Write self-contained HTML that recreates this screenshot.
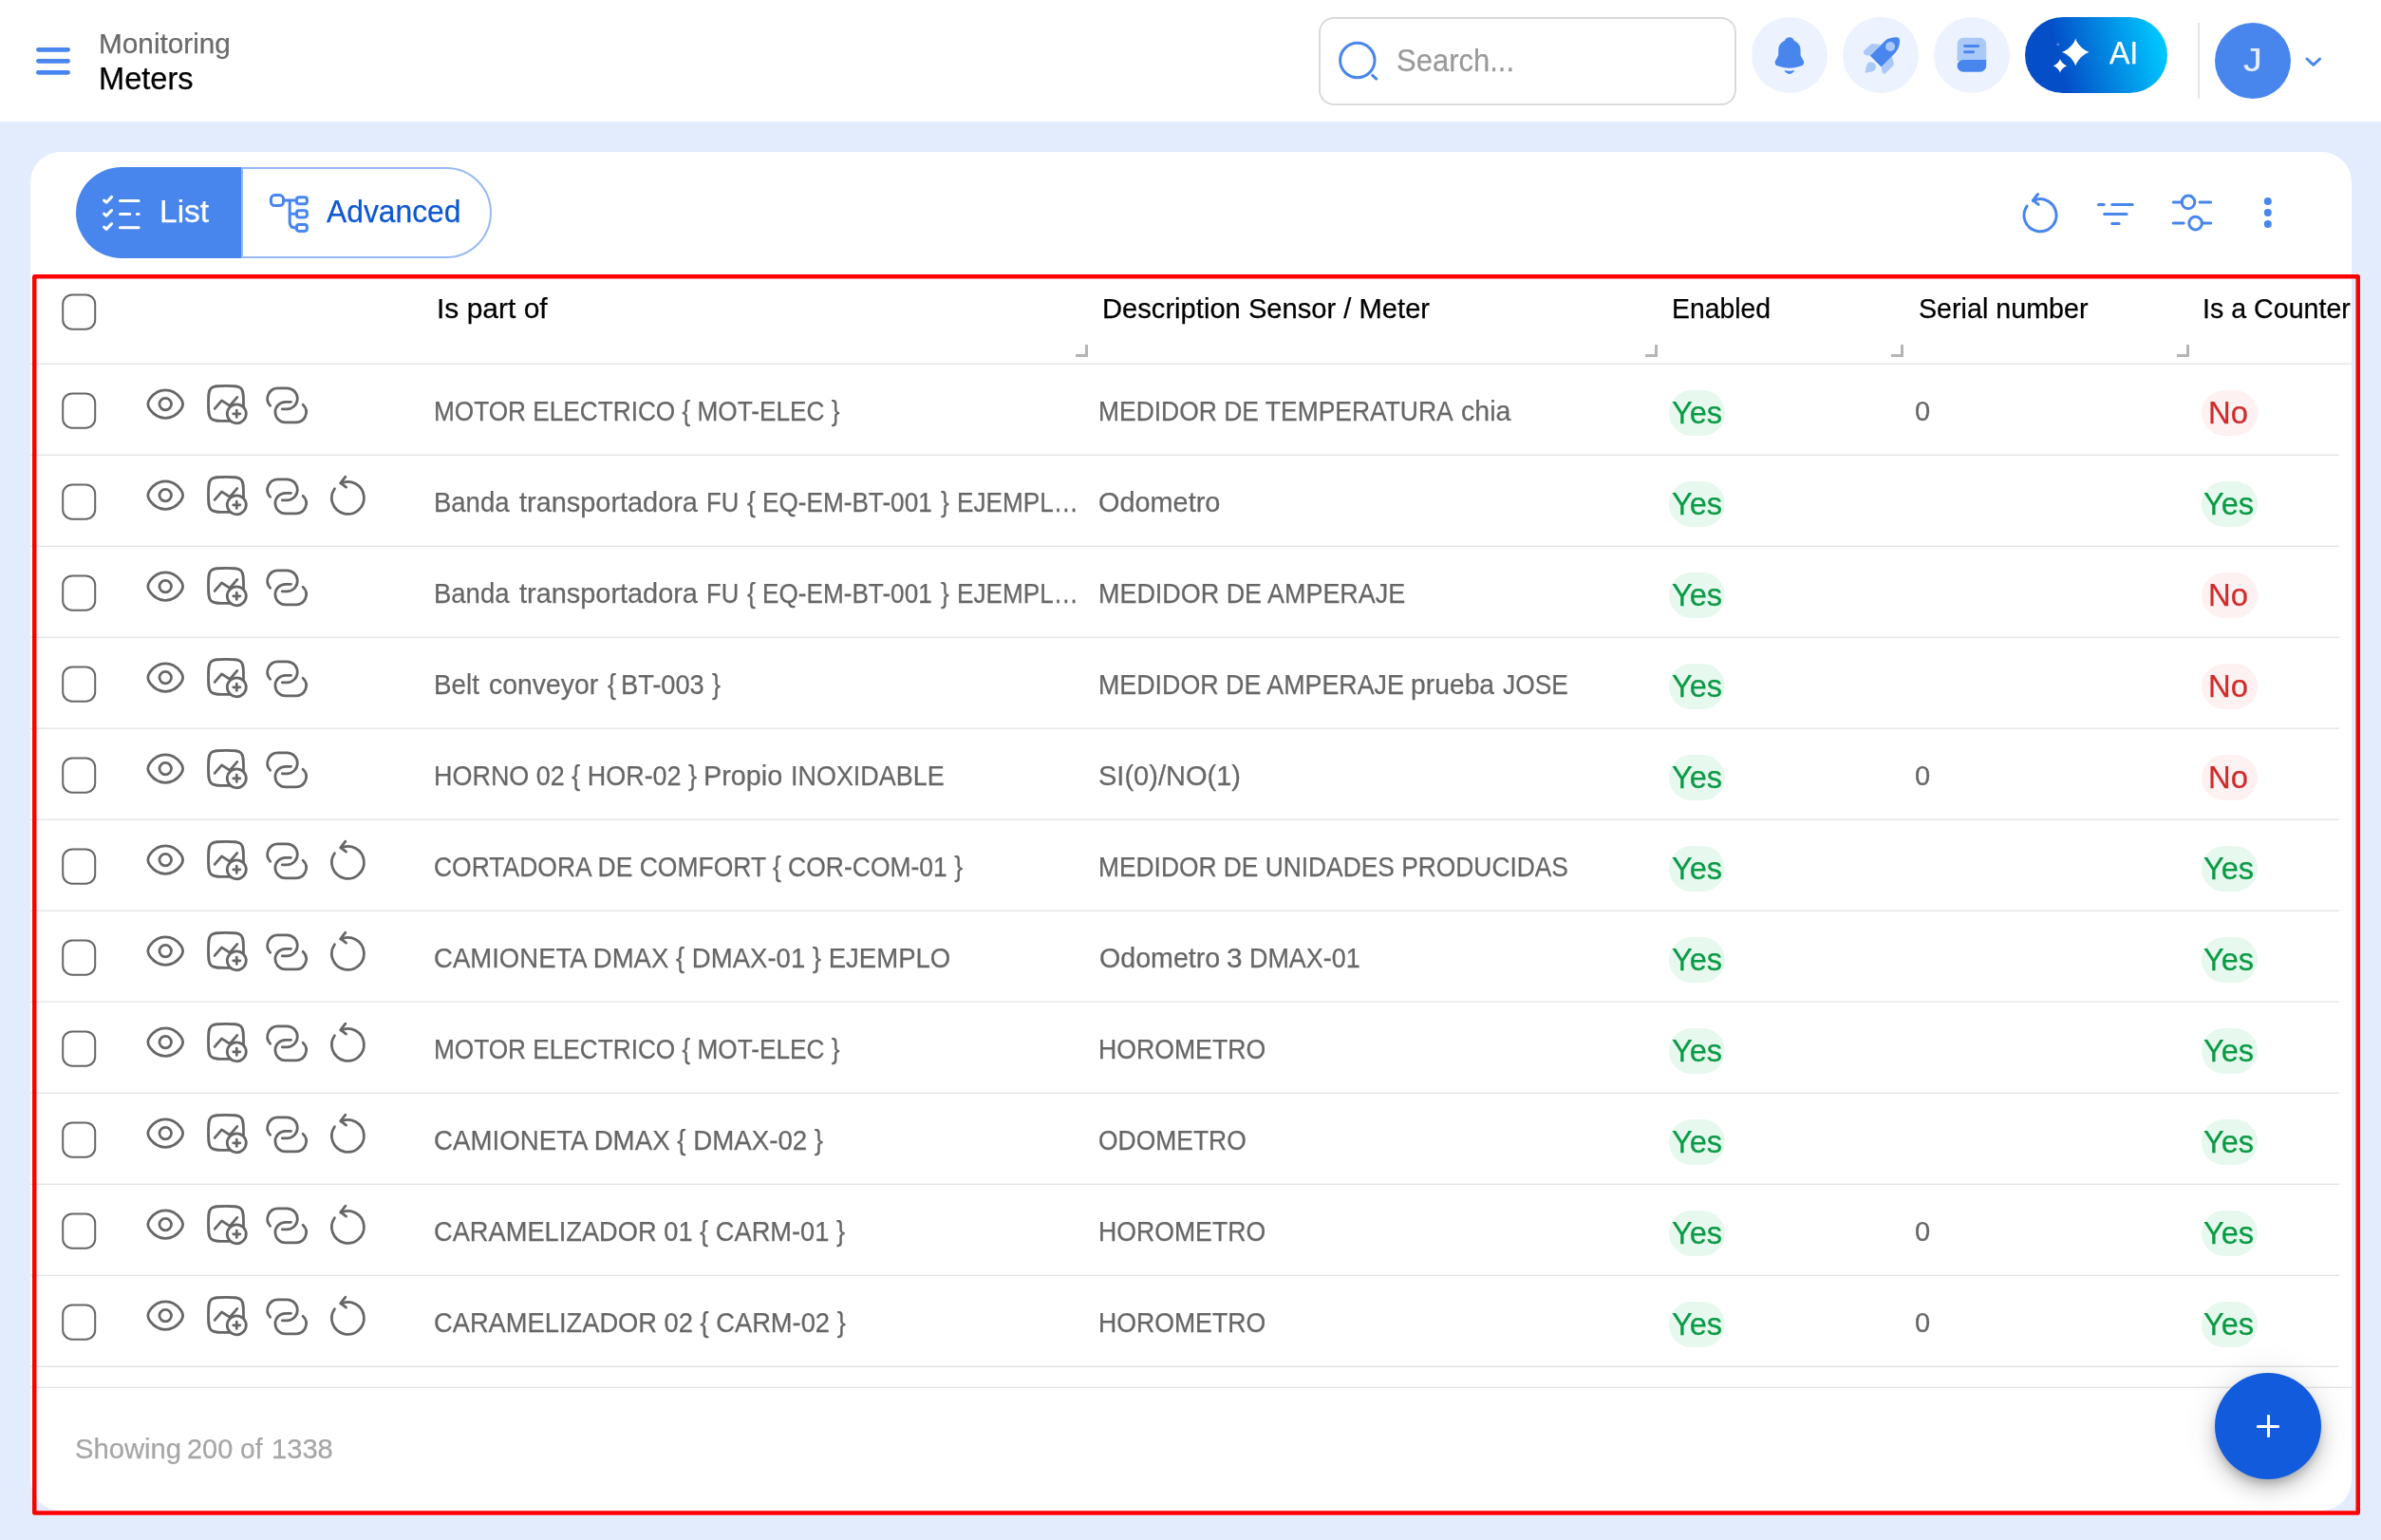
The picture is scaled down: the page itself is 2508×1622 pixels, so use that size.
<!DOCTYPE html>
<html lang="en"><head><meta charset="utf-8"><title>Meters</title>
<style>
html,body{margin:0;padding:0}
body{width:2508px;height:1622px;overflow:hidden;background:#e3ecfd;position:relative;font-family:"Liberation Sans", sans-serif;}
.t{position:absolute;white-space:nowrap;transform-origin:0 0;display:block;-webkit-text-stroke:0.25px}
.ic{position:absolute;overflow:visible}
#txt{position:absolute;left:0;top:0;width:2508px;height:1622px;will-change:transform}
#hdr{position:absolute;left:0;top:0;width:2508px;height:128px;background:#fff}
#card{position:absolute;left:32px;top:160px;width:2445px;height:1431px;background:#fff;border-radius:32px}
#search{position:absolute;left:1389px;top:17.5px;width:436px;height:89px;border:2px solid #dadada;border-radius:16px;background:#fff}
.circ{position:absolute;top:18px;width:80px;height:80px;border-radius:50%;background:#ecf2fe}
#ai{position:absolute;left:2133px;top:18px;width:150px;height:80px;border-radius:40px;background:linear-gradient(75deg,#044fc8 27%,#00c8ff 93%)}
#vdiv{position:absolute;left:2315px;top:24px;width:2px;height:80px;background:#e6e6e6}
#avatar{position:absolute;left:2333px;top:24px;width:80px;height:80px;border-radius:50%;background:#4886ee}
#seg-list{position:absolute;left:80px;top:176px;width:174px;height:96px;border-radius:48px 0 0 48px;background:#4886ee}
#seg-adv{position:absolute;left:254px;top:176px;width:260px;height:92px;border-radius:0 48px 48px 0;background:#fff;border:2px solid #98b8f4}
.row{position:absolute;left:32px;width:2432px;height:94px}
.cb{position:absolute;left:33px;width:32px;height:34px;border:2px solid #666;border-radius:10px;display:block}
#hcb{position:absolute;left:65px;top:309.5px}
.sep{position:absolute;left:32px;width:2432px;height:2px;background:linear-gradient(#f4f4f4 50%,#e4e4e4 50%)}
.bdg{position:absolute;width:59px;height:48px;border-radius:24px;display:block}
.bdg.g{background:#e7f8ee}
.bdg.r{background:#fef1f1}
.rh{position:absolute;top:363px;width:10px;height:10px;border-right:3px solid #b5b5b5;border-bottom:3px solid #b5b5b5;display:block}
#hline{position:absolute;left:32px;top:382px;width:2445px;height:2px;background:linear-gradient(#f4f4f4 50%,#e4e4e4 50%)}
#fline{position:absolute;left:32px;top:1460px;width:2445px;height:2px;background:linear-gradient(#f4f4f4 50%,#e4e4e4 50%)}
#fab{position:absolute;left:2333px;top:1446px;width:112px;height:112px;border-radius:50%;background:#115bdc;box-shadow:0 6px 10px -2px rgba(0,0,0,.2),0 12px 20px 0 rgba(0,0,0,.14),0 2px 36px 0 rgba(0,0,0,.12)}
#fab:before,#fab:after{content:"";position:absolute;background:#fff;border-radius:1px}
#fab:before{left:43.7px;top:54.5px;width:24.6px;height:3px}
#fab:after{left:54.5px;top:43.7px;width:3px;height:24.6px}
#redbox{position:absolute;left:0;top:0;overflow:visible}
</style></head><body>

<div id="hdr">
<svg class="ic" style="left:36px;top:44px" width="40" height="40" viewBox="36 44 40 40" fill="none" stroke="#4886ee" stroke-width="4.8" stroke-linecap="round"><path d="M40.4 52.3H71.6M40.4 64.3H71.6M40.4 76.3H71.6"/></svg>
<div id="search"></div>
<svg class="ic" style="left:1405px;top:40px" width="50" height="50" viewBox="1405 40 50 50" fill="none" stroke="#4886ee" stroke-width="3" stroke-linecap="round"><circle cx="1429.8" cy="63.5" r="18.2"/><path d="M1445.6 79.4L1449.8 83.1"/></svg>
<div class="circ" style="left:1845px"></div>
<div class="circ" style="left:1941px"></div>
<div class="circ" style="left:2037px"></div>
<svg class="ic" style="left:1845px;top:18px" width="80" height="80" viewBox="1845 18 80 80"><g transform="translate(1884.9 0)" fill="#4886ee"><path d="M0 39.3C2.6 39.3 4 40.8 4.9 42.8C7.5 44 9.5 46 10.8 48.3C11.4 49.5 11.6 51 11.6 52.2L11.67 57.6C11.8 59 12.3 59.6 12.76 60.3L14.5 63.45C15.2 64.6 15.4 65.2 15.2 65.8C15.2 66.6 15 67.3 14.7 67.74C14.3 68.4 13.6 68.9 12.76 69.3C10.5 70.2 8.5 70.7 6.5 71.05C4.3 71.45 2.2 71.64 0 71.64C-2.2 71.64 -4.3 71.45 -6.5 71.05C-8.5 70.7 -10.5 70.2 -12.76 69.3C-13.6 68.9 -14.3 68.4 -14.7 67.74C-15 67.3 -15.2 66.6 -15.2 65.8C-15.4 65.2 -15.2 64.6 -14.5 63.45L-12.76 60.3C-12.3 59.6 -11.8 59 -11.67 57.6L-11.6 52.2C-11.6 51 -11.4 49.5 -10.8 48.3C-9.5 46 -7.5 44 -4.9 42.8C-4 40.8 -2.6 39.3 0 39.3Z"/><path d="M-5.5 74.1Q0 75.3 5.4 74.1Q3.6 77.9 0 77.9Q-3.6 77.9 -5.5 74.1Z"/></g></svg>
<svg class="ic" style="left:1941px;top:18px" width="80" height="80" viewBox="1941 18 80 80"><g fill="#abc9f7"><path d="M1969.9 58.8L1981 47.1L1972.5 46.1Q1971.3 45.9 1970.4 46.8L1963.6 53.2Q1962.6 54.2 1963 55.8Q1963.4 57.5 1965 57.9Z"/><path d="M1981.6 70.5L1992.9 59.2L1994.8 66.5Q1995.2 67.9 1994.2 68.9L1986.3 76.9Q1985.2 77.9 1984 77.6Q1982.8 77.3 1982.6 76Z"/><path d="M1965.3 76.8C1964.7 76.8 1964.5 76.3 1964.7 75.4L1966.5 67.8C1967.3 65.8 1969.5 65.4 1971.1 65.6C1973.8 65.6 1976 67.8 1976 70.5C1976 72.5 1975 73.8 1973.8 74.6C1972.5 75.4 1968 76.4 1965.3 76.8Z"/></g><path fill="#4886ee" d="M1969.9 58.8L1986.1 42.4C1988.5 40.6 1993 39.3 1997.75 39.3C1999.6 39.3 2001.1 40.4 2001.1 42.8C2001.2 46.5 1999.6 51.5 1997 54.9L1981.6 70.5Z"/><circle cx="1991.1" cy="49.05" r="5.05" fill="#abc9f7"/></svg>
<svg class="ic" style="left:2037px;top:18px" width="80" height="80" viewBox="2037 18 80 80"><path fill="#abc9f7" d="M2061.6 69.3V46.3a6.6 6.6 0 0 1 6.6-6.6H2085.6a6.6 6.6 0 0 1 6.6 6.6V64H2061.6Z"/><path fill="#4886ee" d="M2068 62.9H2092.2V69.1a6.6 6.6 0 0 1-6.6 6.6H2068a6.4 6.4 0 0 1 0-12.8Z"/><path d="M2069.5 48.55H2083.9M2069.5 54.8H2078.6" stroke="#4886ee" stroke-width="2.9" stroke-linecap="round" fill="none"/></svg>
<div id="ai"></div>
<svg class="ic" style="left:2133px;top:18px" width="150" height="80" viewBox="2133 18 150 80" fill="#fff"><path d="M2186.3 40.60C2187.74 46.36 2194.94 53.56 2200.70 55.0C2194.94 56.44 2187.74 63.64 2186.3 69.40C2184.86 63.64 2177.66 56.44 2171.90 55.0C2177.66 53.56 2184.86 46.36 2186.3 40.60Z"/><path d="M2170.0 61.90C2170.74 64.86 2174.44 68.56 2177.40 69.3C2174.44 70.04 2170.74 73.74 2170.0 76.70C2169.26 73.74 2165.56 70.04 2162.60 69.3C2165.56 68.56 2169.26 64.86 2170.0 61.90Z"/><circle cx="2167.8" cy="46.8" r="1.5" opacity=".3"/></svg>
<div id="vdiv"></div>
<div id="avatar"></div>
<svg class="ic" style="left:2425px;top:55px" width="24" height="20" viewBox="2425 55 24 20" fill="none" stroke="#4886ee" stroke-width="3" stroke-linecap="round" stroke-linejoin="round"><path d="M2430 62L2436.8 68.3L2443.6 62"/></svg>
</div>

<div id="card"></div>
<div id="seg-list"></div>
<div id="seg-adv"></div>
<svg class="ic" style="left:104px;top:200px" width="48" height="48" viewBox="104 200 48 48" fill="none" stroke="#fff" stroke-width="3" stroke-linecap="round" stroke-linejoin="round"><path d="M109.6 211L112.1 213.2L117.6 207.4M109.6 225.1L112.1 227.3L117.6 221.5M109.6 239.2L112.1 241.4L117.6 235.6"/><path d="M126.5 211.4H146.1M126.5 225.6H136.7M144.4 225.6H146.1M126.5 239.7H146.1"/></svg>
<svg class="ic" style="left:280px;top:200px" width="48" height="48" viewBox="280 200 48 48" fill="none" stroke="#4886ee" stroke-width="3" stroke-linecap="round" stroke-linejoin="round"><rect x="285.4" y="205.6" width="13.1" height="10.9" rx="4"/><rect x="312.4" y="207.8" width="11" height="7" rx="2.6"/><rect x="312.4" y="221.8" width="11" height="7.1" rx="2.6"/><rect x="312.4" y="236.4" width="11" height="7" rx="2.6"/><path d="M298.5 211.1H312.4M305.2 211.1V234Q305.2 239.9 311 239.9H312.4M305.2 225.3H312.4"/></svg>

<svg class="ic" style="left:2126.9px;top:201.8px;stroke:#4886ee;stroke-width:3" width="44" height="44" viewBox="0 0 44 44"><g fill="none" stroke-linecap="round" stroke-linejoin="round"><path d="M14.5 9.5A17 17 0 1 1 8.07 15.05"/><path d="M19.5 2.5L14.5 9L20.2 13.4"/></g></svg>
<svg class="ic" style="left:2204px;top:204px" width="48" height="44" viewBox="2204 204 48 44" fill="none" stroke="#4886ee" stroke-width="3" stroke-linecap="round"><path d="M2210.5 215.5H2216.2M2224.7 215.5H2246.2M2216.6 225.4H2240.1M2224.7 235.4H2232.1"/></svg>
<svg class="ic" style="left:2284px;top:200px" width="50" height="48" viewBox="2284 200 50 48" fill="none" stroke="#4886ee" stroke-width="3" stroke-linecap="round"><circle cx="2305" cy="212.9" r="6.8"/><circle cx="2312.6" cy="235.1" r="6.8"/><path d="M2289.2 212.9H2298.3M2317.1 212.9H2328.7M2289.2 235.1H2300.2M2319.3 235.1H2328.7"/></svg>
<svg class="ic" style="left:2380px;top:204px" width="18" height="40" viewBox="2380 204 18 40" fill="#4886ee"><circle cx="2388.8" cy="212" r="4"/><circle cx="2388.8" cy="224" r="4"/><circle cx="2388.8" cy="235.9" r="4"/></svg>

<svg class="ic" style="left:65px;top:309px" width="38" height="40" viewBox="-0.2 -0.4 38 40"><g fill="none" stroke="#666" stroke-width="2"><rect x="1" y="1" width="34" height="36.3" rx="9.8"/></g></svg>
<span class="rh" style="left:1133px"></span><span class="rh" style="left:1733px"></span><span class="rh" style="left:1992px"></span><span class="rh" style="left:2293px"></span>
<div id="hline"></div>
<div style="color:#666666;stroke:#666666;stroke-width:2.75">
<svg class="ic" style="left:65px;top:413px" width="38" height="40" viewBox="-0.2 -0.4 38 40"><g fill="none" stroke="#666" stroke-width="2"><rect x="1" y="1" width="34" height="36.3" rx="9.8"/></g></svg><svg class="ic" style="left:152px;top:403px" width="44.25" height="44.25" viewBox="-0.054 -0.266 24 24"><g fill="none" stroke="#666666" stroke-width="1.5"><path d="M3.27489 15.2957C2.42496 14.1915 2 13.6394 2 12C2 10.3606 2.42496 9.80853 3.27489 8.70433C4.97196 6.49956 7.81811 4 12 4C16.1819 4 19.028 6.49956 20.7251 8.70433C21.575 9.80853 22 10.3606 22 12C22 13.6394 21.575 14.1915 20.7251 15.2957C19.028 17.5004 16.1819 20 12 20C7.81811 20 4.97196 17.5004 3.27489 15.2957Z"/><circle cx="12" cy="12" r="3.4"/></g></svg><svg class="ic" style="left:216px;top:403px" width="44.4" height="44.4" viewBox="0.1 0.18 24 24"><g fill="none" stroke="#666666" stroke-width="1.5" stroke-linecap="round" stroke-linejoin="round"><path d="M2 12C2 7.286 2 4.929 3.464 3.464C4.929 2 7.286 2 12 2C16.714 2 19.071 2 20.536 3.464C22 4.929 22 7.286 22 12C22 16.714 22 19.071 20.536 20.536C19.071 22 16.714 22 12 22C7.286 22 4.929 22 3.464 20.536C2 19.071 2 16.714 2 12Z"/><path d="M5.6 15L9.6 10.4L14.2 13.4L18.4 8.5"/><circle cx="18.1" cy="17.9" r="5.4" fill="#fff"/><path d="M18.1 15.95V19.85M16.15 17.9H20.05"/></g></svg><svg class="ic" style="left:280px;top:404px" width="44" height="44" viewBox="0 0.33 44 44"><g fill="none" stroke="#666666" stroke-width="2.75" stroke-linecap="round"><path d="M4.7 23.7A11 11 0 0 1 13.3 5.2H22.3A11 11 0 0 1 22.3 27.2H17.2"/><path d="M26.5 19.7H20.65A10.75 10.75 0 0 0 20.65 41.2H31.05A10.75 10.75 0 0 0 39.1 22.6"/></g></svg><span class="bdg g" style="left:1758.3px;top:410.9px"></span><span class="bdg r" style="left:2318.7px;top:410.9px"></span><div class="sep" style="top:478.0px"></div><svg class="ic" style="left:65px;top:509px" width="38" height="40" viewBox="-0.2 -0.4 38 40"><g fill="none" stroke="#666" stroke-width="2"><rect x="1" y="1" width="34" height="36.3" rx="9.8"/></g></svg><svg class="ic" style="left:152px;top:499px" width="44.25" height="44.25" viewBox="-0.054 -0.266 24 24"><g fill="none" stroke="#666666" stroke-width="1.5"><path d="M3.27489 15.2957C2.42496 14.1915 2 13.6394 2 12C2 10.3606 2.42496 9.80853 3.27489 8.70433C4.97196 6.49956 7.81811 4 12 4C16.1819 4 19.028 6.49956 20.7251 8.70433C21.575 9.80853 22 10.3606 22 12C22 13.6394 21.575 14.1915 20.7251 15.2957C19.028 17.5004 16.1819 20 12 20C7.81811 20 4.97196 17.5004 3.27489 15.2957Z"/><circle cx="12" cy="12" r="3.4"/></g></svg><svg class="ic" style="left:216px;top:499px" width="44.4" height="44.4" viewBox="0.1 0.18 24 24"><g fill="none" stroke="#666666" stroke-width="1.5" stroke-linecap="round" stroke-linejoin="round"><path d="M2 12C2 7.286 2 4.929 3.464 3.464C4.929 2 7.286 2 12 2C16.714 2 19.071 2 20.536 3.464C22 4.929 22 7.286 22 12C22 16.714 22 19.071 20.536 20.536C19.071 22 16.714 22 12 22C7.286 22 4.929 22 3.464 20.536C2 19.071 2 16.714 2 12Z"/><path d="M5.6 15L9.6 10.4L14.2 13.4L18.4 8.5"/><circle cx="18.1" cy="17.9" r="5.4" fill="#fff"/><path d="M18.1 15.95V19.85M16.15 17.9H20.05"/></g></svg><svg class="ic" style="left:280px;top:500px" width="44" height="44" viewBox="0 0.33 44 44"><g fill="none" stroke="#666666" stroke-width="2.75" stroke-linecap="round"><path d="M4.7 23.7A11 11 0 0 1 13.3 5.2H22.3A11 11 0 0 1 22.3 27.2H17.2"/><path d="M26.5 19.7H20.65A10.75 10.75 0 0 0 20.65 41.2H31.05A10.75 10.75 0 0 0 39.1 22.6"/></g></svg><svg class="ic" style="left:344px;top:500px" width="44" height="44" viewBox="-0.35 0.33 44 44"><g fill="none" stroke-linecap="round" stroke-linejoin="round"><path d="M14.5 9.5A17 17 0 1 1 8.07 15.05"/><path d="M19.5 2.5L14.5 9L20.2 13.4"/></g></svg><span class="bdg g" style="left:1758.3px;top:506.9px"></span><span class="bdg g" style="left:2318.7px;top:506.9px"></span><div class="sep" style="top:574.0px"></div><svg class="ic" style="left:65px;top:605px" width="38" height="40" viewBox="-0.2 -0.4 38 40"><g fill="none" stroke="#666" stroke-width="2"><rect x="1" y="1" width="34" height="36.3" rx="9.8"/></g></svg><svg class="ic" style="left:152px;top:595px" width="44.25" height="44.25" viewBox="-0.054 -0.266 24 24"><g fill="none" stroke="#666666" stroke-width="1.5"><path d="M3.27489 15.2957C2.42496 14.1915 2 13.6394 2 12C2 10.3606 2.42496 9.80853 3.27489 8.70433C4.97196 6.49956 7.81811 4 12 4C16.1819 4 19.028 6.49956 20.7251 8.70433C21.575 9.80853 22 10.3606 22 12C22 13.6394 21.575 14.1915 20.7251 15.2957C19.028 17.5004 16.1819 20 12 20C7.81811 20 4.97196 17.5004 3.27489 15.2957Z"/><circle cx="12" cy="12" r="3.4"/></g></svg><svg class="ic" style="left:216px;top:595px" width="44.4" height="44.4" viewBox="0.1 0.18 24 24"><g fill="none" stroke="#666666" stroke-width="1.5" stroke-linecap="round" stroke-linejoin="round"><path d="M2 12C2 7.286 2 4.929 3.464 3.464C4.929 2 7.286 2 12 2C16.714 2 19.071 2 20.536 3.464C22 4.929 22 7.286 22 12C22 16.714 22 19.071 20.536 20.536C19.071 22 16.714 22 12 22C7.286 22 4.929 22 3.464 20.536C2 19.071 2 16.714 2 12Z"/><path d="M5.6 15L9.6 10.4L14.2 13.4L18.4 8.5"/><circle cx="18.1" cy="17.9" r="5.4" fill="#fff"/><path d="M18.1 15.95V19.85M16.15 17.9H20.05"/></g></svg><svg class="ic" style="left:280px;top:596px" width="44" height="44" viewBox="0 0.33 44 44"><g fill="none" stroke="#666666" stroke-width="2.75" stroke-linecap="round"><path d="M4.7 23.7A11 11 0 0 1 13.3 5.2H22.3A11 11 0 0 1 22.3 27.2H17.2"/><path d="M26.5 19.7H20.65A10.75 10.75 0 0 0 20.65 41.2H31.05A10.75 10.75 0 0 0 39.1 22.6"/></g></svg><span class="bdg g" style="left:1758.3px;top:602.9px"></span><span class="bdg r" style="left:2318.7px;top:602.9px"></span><div class="sep" style="top:670.0px"></div><svg class="ic" style="left:65px;top:701px" width="38" height="40" viewBox="-0.2 -0.4 38 40"><g fill="none" stroke="#666" stroke-width="2"><rect x="1" y="1" width="34" height="36.3" rx="9.8"/></g></svg><svg class="ic" style="left:152px;top:691px" width="44.25" height="44.25" viewBox="-0.054 -0.266 24 24"><g fill="none" stroke="#666666" stroke-width="1.5"><path d="M3.27489 15.2957C2.42496 14.1915 2 13.6394 2 12C2 10.3606 2.42496 9.80853 3.27489 8.70433C4.97196 6.49956 7.81811 4 12 4C16.1819 4 19.028 6.49956 20.7251 8.70433C21.575 9.80853 22 10.3606 22 12C22 13.6394 21.575 14.1915 20.7251 15.2957C19.028 17.5004 16.1819 20 12 20C7.81811 20 4.97196 17.5004 3.27489 15.2957Z"/><circle cx="12" cy="12" r="3.4"/></g></svg><svg class="ic" style="left:216px;top:691px" width="44.4" height="44.4" viewBox="0.1 0.18 24 24"><g fill="none" stroke="#666666" stroke-width="1.5" stroke-linecap="round" stroke-linejoin="round"><path d="M2 12C2 7.286 2 4.929 3.464 3.464C4.929 2 7.286 2 12 2C16.714 2 19.071 2 20.536 3.464C22 4.929 22 7.286 22 12C22 16.714 22 19.071 20.536 20.536C19.071 22 16.714 22 12 22C7.286 22 4.929 22 3.464 20.536C2 19.071 2 16.714 2 12Z"/><path d="M5.6 15L9.6 10.4L14.2 13.4L18.4 8.5"/><circle cx="18.1" cy="17.9" r="5.4" fill="#fff"/><path d="M18.1 15.95V19.85M16.15 17.9H20.05"/></g></svg><svg class="ic" style="left:280px;top:692px" width="44" height="44" viewBox="0 0.33 44 44"><g fill="none" stroke="#666666" stroke-width="2.75" stroke-linecap="round"><path d="M4.7 23.7A11 11 0 0 1 13.3 5.2H22.3A11 11 0 0 1 22.3 27.2H17.2"/><path d="M26.5 19.7H20.65A10.75 10.75 0 0 0 20.65 41.2H31.05A10.75 10.75 0 0 0 39.1 22.6"/></g></svg><span class="bdg g" style="left:1758.3px;top:698.9px"></span><span class="bdg r" style="left:2318.7px;top:698.9px"></span><div class="sep" style="top:766.0px"></div><svg class="ic" style="left:65px;top:797px" width="38" height="40" viewBox="-0.2 -0.4 38 40"><g fill="none" stroke="#666" stroke-width="2"><rect x="1" y="1" width="34" height="36.3" rx="9.8"/></g></svg><svg class="ic" style="left:152px;top:787px" width="44.25" height="44.25" viewBox="-0.054 -0.266 24 24"><g fill="none" stroke="#666666" stroke-width="1.5"><path d="M3.27489 15.2957C2.42496 14.1915 2 13.6394 2 12C2 10.3606 2.42496 9.80853 3.27489 8.70433C4.97196 6.49956 7.81811 4 12 4C16.1819 4 19.028 6.49956 20.7251 8.70433C21.575 9.80853 22 10.3606 22 12C22 13.6394 21.575 14.1915 20.7251 15.2957C19.028 17.5004 16.1819 20 12 20C7.81811 20 4.97196 17.5004 3.27489 15.2957Z"/><circle cx="12" cy="12" r="3.4"/></g></svg><svg class="ic" style="left:216px;top:787px" width="44.4" height="44.4" viewBox="0.1 0.18 24 24"><g fill="none" stroke="#666666" stroke-width="1.5" stroke-linecap="round" stroke-linejoin="round"><path d="M2 12C2 7.286 2 4.929 3.464 3.464C4.929 2 7.286 2 12 2C16.714 2 19.071 2 20.536 3.464C22 4.929 22 7.286 22 12C22 16.714 22 19.071 20.536 20.536C19.071 22 16.714 22 12 22C7.286 22 4.929 22 3.464 20.536C2 19.071 2 16.714 2 12Z"/><path d="M5.6 15L9.6 10.4L14.2 13.4L18.4 8.5"/><circle cx="18.1" cy="17.9" r="5.4" fill="#fff"/><path d="M18.1 15.95V19.85M16.15 17.9H20.05"/></g></svg><svg class="ic" style="left:280px;top:788px" width="44" height="44" viewBox="0 0.33 44 44"><g fill="none" stroke="#666666" stroke-width="2.75" stroke-linecap="round"><path d="M4.7 23.7A11 11 0 0 1 13.3 5.2H22.3A11 11 0 0 1 22.3 27.2H17.2"/><path d="M26.5 19.7H20.65A10.75 10.75 0 0 0 20.65 41.2H31.05A10.75 10.75 0 0 0 39.1 22.6"/></g></svg><span class="bdg g" style="left:1758.3px;top:794.9px"></span><span class="bdg r" style="left:2318.7px;top:794.9px"></span><div class="sep" style="top:862.0px"></div><svg class="ic" style="left:65px;top:893px" width="38" height="40" viewBox="-0.2 -0.4 38 40"><g fill="none" stroke="#666" stroke-width="2"><rect x="1" y="1" width="34" height="36.3" rx="9.8"/></g></svg><svg class="ic" style="left:152px;top:883px" width="44.25" height="44.25" viewBox="-0.054 -0.266 24 24"><g fill="none" stroke="#666666" stroke-width="1.5"><path d="M3.27489 15.2957C2.42496 14.1915 2 13.6394 2 12C2 10.3606 2.42496 9.80853 3.27489 8.70433C4.97196 6.49956 7.81811 4 12 4C16.1819 4 19.028 6.49956 20.7251 8.70433C21.575 9.80853 22 10.3606 22 12C22 13.6394 21.575 14.1915 20.7251 15.2957C19.028 17.5004 16.1819 20 12 20C7.81811 20 4.97196 17.5004 3.27489 15.2957Z"/><circle cx="12" cy="12" r="3.4"/></g></svg><svg class="ic" style="left:216px;top:883px" width="44.4" height="44.4" viewBox="0.1 0.18 24 24"><g fill="none" stroke="#666666" stroke-width="1.5" stroke-linecap="round" stroke-linejoin="round"><path d="M2 12C2 7.286 2 4.929 3.464 3.464C4.929 2 7.286 2 12 2C16.714 2 19.071 2 20.536 3.464C22 4.929 22 7.286 22 12C22 16.714 22 19.071 20.536 20.536C19.071 22 16.714 22 12 22C7.286 22 4.929 22 3.464 20.536C2 19.071 2 16.714 2 12Z"/><path d="M5.6 15L9.6 10.4L14.2 13.4L18.4 8.5"/><circle cx="18.1" cy="17.9" r="5.4" fill="#fff"/><path d="M18.1 15.95V19.85M16.15 17.9H20.05"/></g></svg><svg class="ic" style="left:280px;top:884px" width="44" height="44" viewBox="0 0.33 44 44"><g fill="none" stroke="#666666" stroke-width="2.75" stroke-linecap="round"><path d="M4.7 23.7A11 11 0 0 1 13.3 5.2H22.3A11 11 0 0 1 22.3 27.2H17.2"/><path d="M26.5 19.7H20.65A10.75 10.75 0 0 0 20.65 41.2H31.05A10.75 10.75 0 0 0 39.1 22.6"/></g></svg><svg class="ic" style="left:344px;top:884px" width="44" height="44" viewBox="-0.35 0.33 44 44"><g fill="none" stroke-linecap="round" stroke-linejoin="round"><path d="M14.5 9.5A17 17 0 1 1 8.07 15.05"/><path d="M19.5 2.5L14.5 9L20.2 13.4"/></g></svg><span class="bdg g" style="left:1758.3px;top:890.9px"></span><span class="bdg g" style="left:2318.7px;top:890.9px"></span><div class="sep" style="top:958.0px"></div><svg class="ic" style="left:65px;top:989px" width="38" height="40" viewBox="-0.2 -0.4 38 40"><g fill="none" stroke="#666" stroke-width="2"><rect x="1" y="1" width="34" height="36.3" rx="9.8"/></g></svg><svg class="ic" style="left:152px;top:979px" width="44.25" height="44.25" viewBox="-0.054 -0.266 24 24"><g fill="none" stroke="#666666" stroke-width="1.5"><path d="M3.27489 15.2957C2.42496 14.1915 2 13.6394 2 12C2 10.3606 2.42496 9.80853 3.27489 8.70433C4.97196 6.49956 7.81811 4 12 4C16.1819 4 19.028 6.49956 20.7251 8.70433C21.575 9.80853 22 10.3606 22 12C22 13.6394 21.575 14.1915 20.7251 15.2957C19.028 17.5004 16.1819 20 12 20C7.81811 20 4.97196 17.5004 3.27489 15.2957Z"/><circle cx="12" cy="12" r="3.4"/></g></svg><svg class="ic" style="left:216px;top:979px" width="44.4" height="44.4" viewBox="0.1 0.18 24 24"><g fill="none" stroke="#666666" stroke-width="1.5" stroke-linecap="round" stroke-linejoin="round"><path d="M2 12C2 7.286 2 4.929 3.464 3.464C4.929 2 7.286 2 12 2C16.714 2 19.071 2 20.536 3.464C22 4.929 22 7.286 22 12C22 16.714 22 19.071 20.536 20.536C19.071 22 16.714 22 12 22C7.286 22 4.929 22 3.464 20.536C2 19.071 2 16.714 2 12Z"/><path d="M5.6 15L9.6 10.4L14.2 13.4L18.4 8.5"/><circle cx="18.1" cy="17.9" r="5.4" fill="#fff"/><path d="M18.1 15.95V19.85M16.15 17.9H20.05"/></g></svg><svg class="ic" style="left:280px;top:980px" width="44" height="44" viewBox="0 0.33 44 44"><g fill="none" stroke="#666666" stroke-width="2.75" stroke-linecap="round"><path d="M4.7 23.7A11 11 0 0 1 13.3 5.2H22.3A11 11 0 0 1 22.3 27.2H17.2"/><path d="M26.5 19.7H20.65A10.75 10.75 0 0 0 20.65 41.2H31.05A10.75 10.75 0 0 0 39.1 22.6"/></g></svg><svg class="ic" style="left:344px;top:980px" width="44" height="44" viewBox="-0.35 0.33 44 44"><g fill="none" stroke-linecap="round" stroke-linejoin="round"><path d="M14.5 9.5A17 17 0 1 1 8.07 15.05"/><path d="M19.5 2.5L14.5 9L20.2 13.4"/></g></svg><span class="bdg g" style="left:1758.3px;top:986.9px"></span><span class="bdg g" style="left:2318.7px;top:986.9px"></span><div class="sep" style="top:1054.0px"></div><svg class="ic" style="left:65px;top:1085px" width="38" height="40" viewBox="-0.2 -0.4 38 40"><g fill="none" stroke="#666" stroke-width="2"><rect x="1" y="1" width="34" height="36.3" rx="9.8"/></g></svg><svg class="ic" style="left:152px;top:1075px" width="44.25" height="44.25" viewBox="-0.054 -0.266 24 24"><g fill="none" stroke="#666666" stroke-width="1.5"><path d="M3.27489 15.2957C2.42496 14.1915 2 13.6394 2 12C2 10.3606 2.42496 9.80853 3.27489 8.70433C4.97196 6.49956 7.81811 4 12 4C16.1819 4 19.028 6.49956 20.7251 8.70433C21.575 9.80853 22 10.3606 22 12C22 13.6394 21.575 14.1915 20.7251 15.2957C19.028 17.5004 16.1819 20 12 20C7.81811 20 4.97196 17.5004 3.27489 15.2957Z"/><circle cx="12" cy="12" r="3.4"/></g></svg><svg class="ic" style="left:216px;top:1075px" width="44.4" height="44.4" viewBox="0.1 0.18 24 24"><g fill="none" stroke="#666666" stroke-width="1.5" stroke-linecap="round" stroke-linejoin="round"><path d="M2 12C2 7.286 2 4.929 3.464 3.464C4.929 2 7.286 2 12 2C16.714 2 19.071 2 20.536 3.464C22 4.929 22 7.286 22 12C22 16.714 22 19.071 20.536 20.536C19.071 22 16.714 22 12 22C7.286 22 4.929 22 3.464 20.536C2 19.071 2 16.714 2 12Z"/><path d="M5.6 15L9.6 10.4L14.2 13.4L18.4 8.5"/><circle cx="18.1" cy="17.9" r="5.4" fill="#fff"/><path d="M18.1 15.95V19.85M16.15 17.9H20.05"/></g></svg><svg class="ic" style="left:280px;top:1076px" width="44" height="44" viewBox="0 0.33 44 44"><g fill="none" stroke="#666666" stroke-width="2.75" stroke-linecap="round"><path d="M4.7 23.7A11 11 0 0 1 13.3 5.2H22.3A11 11 0 0 1 22.3 27.2H17.2"/><path d="M26.5 19.7H20.65A10.75 10.75 0 0 0 20.65 41.2H31.05A10.75 10.75 0 0 0 39.1 22.6"/></g></svg><svg class="ic" style="left:344px;top:1076px" width="44" height="44" viewBox="-0.35 0.33 44 44"><g fill="none" stroke-linecap="round" stroke-linejoin="round"><path d="M14.5 9.5A17 17 0 1 1 8.07 15.05"/><path d="M19.5 2.5L14.5 9L20.2 13.4"/></g></svg><span class="bdg g" style="left:1758.3px;top:1082.9px"></span><span class="bdg g" style="left:2318.7px;top:1082.9px"></span><div class="sep" style="top:1150.0px"></div><svg class="ic" style="left:65px;top:1181px" width="38" height="40" viewBox="-0.2 -0.4 38 40"><g fill="none" stroke="#666" stroke-width="2"><rect x="1" y="1" width="34" height="36.3" rx="9.8"/></g></svg><svg class="ic" style="left:152px;top:1171px" width="44.25" height="44.25" viewBox="-0.054 -0.266 24 24"><g fill="none" stroke="#666666" stroke-width="1.5"><path d="M3.27489 15.2957C2.42496 14.1915 2 13.6394 2 12C2 10.3606 2.42496 9.80853 3.27489 8.70433C4.97196 6.49956 7.81811 4 12 4C16.1819 4 19.028 6.49956 20.7251 8.70433C21.575 9.80853 22 10.3606 22 12C22 13.6394 21.575 14.1915 20.7251 15.2957C19.028 17.5004 16.1819 20 12 20C7.81811 20 4.97196 17.5004 3.27489 15.2957Z"/><circle cx="12" cy="12" r="3.4"/></g></svg><svg class="ic" style="left:216px;top:1171px" width="44.4" height="44.4" viewBox="0.1 0.18 24 24"><g fill="none" stroke="#666666" stroke-width="1.5" stroke-linecap="round" stroke-linejoin="round"><path d="M2 12C2 7.286 2 4.929 3.464 3.464C4.929 2 7.286 2 12 2C16.714 2 19.071 2 20.536 3.464C22 4.929 22 7.286 22 12C22 16.714 22 19.071 20.536 20.536C19.071 22 16.714 22 12 22C7.286 22 4.929 22 3.464 20.536C2 19.071 2 16.714 2 12Z"/><path d="M5.6 15L9.6 10.4L14.2 13.4L18.4 8.5"/><circle cx="18.1" cy="17.9" r="5.4" fill="#fff"/><path d="M18.1 15.95V19.85M16.15 17.9H20.05"/></g></svg><svg class="ic" style="left:280px;top:1172px" width="44" height="44" viewBox="0 0.33 44 44"><g fill="none" stroke="#666666" stroke-width="2.75" stroke-linecap="round"><path d="M4.7 23.7A11 11 0 0 1 13.3 5.2H22.3A11 11 0 0 1 22.3 27.2H17.2"/><path d="M26.5 19.7H20.65A10.75 10.75 0 0 0 20.65 41.2H31.05A10.75 10.75 0 0 0 39.1 22.6"/></g></svg><svg class="ic" style="left:344px;top:1172px" width="44" height="44" viewBox="-0.35 0.33 44 44"><g fill="none" stroke-linecap="round" stroke-linejoin="round"><path d="M14.5 9.5A17 17 0 1 1 8.07 15.05"/><path d="M19.5 2.5L14.5 9L20.2 13.4"/></g></svg><span class="bdg g" style="left:1758.3px;top:1178.9px"></span><span class="bdg g" style="left:2318.7px;top:1178.9px"></span><div class="sep" style="top:1246.0px"></div><svg class="ic" style="left:65px;top:1277px" width="38" height="40" viewBox="-0.2 -0.4 38 40"><g fill="none" stroke="#666" stroke-width="2"><rect x="1" y="1" width="34" height="36.3" rx="9.8"/></g></svg><svg class="ic" style="left:152px;top:1267px" width="44.25" height="44.25" viewBox="-0.054 -0.266 24 24"><g fill="none" stroke="#666666" stroke-width="1.5"><path d="M3.27489 15.2957C2.42496 14.1915 2 13.6394 2 12C2 10.3606 2.42496 9.80853 3.27489 8.70433C4.97196 6.49956 7.81811 4 12 4C16.1819 4 19.028 6.49956 20.7251 8.70433C21.575 9.80853 22 10.3606 22 12C22 13.6394 21.575 14.1915 20.7251 15.2957C19.028 17.5004 16.1819 20 12 20C7.81811 20 4.97196 17.5004 3.27489 15.2957Z"/><circle cx="12" cy="12" r="3.4"/></g></svg><svg class="ic" style="left:216px;top:1267px" width="44.4" height="44.4" viewBox="0.1 0.18 24 24"><g fill="none" stroke="#666666" stroke-width="1.5" stroke-linecap="round" stroke-linejoin="round"><path d="M2 12C2 7.286 2 4.929 3.464 3.464C4.929 2 7.286 2 12 2C16.714 2 19.071 2 20.536 3.464C22 4.929 22 7.286 22 12C22 16.714 22 19.071 20.536 20.536C19.071 22 16.714 22 12 22C7.286 22 4.929 22 3.464 20.536C2 19.071 2 16.714 2 12Z"/><path d="M5.6 15L9.6 10.4L14.2 13.4L18.4 8.5"/><circle cx="18.1" cy="17.9" r="5.4" fill="#fff"/><path d="M18.1 15.95V19.85M16.15 17.9H20.05"/></g></svg><svg class="ic" style="left:280px;top:1268px" width="44" height="44" viewBox="0 0.33 44 44"><g fill="none" stroke="#666666" stroke-width="2.75" stroke-linecap="round"><path d="M4.7 23.7A11 11 0 0 1 13.3 5.2H22.3A11 11 0 0 1 22.3 27.2H17.2"/><path d="M26.5 19.7H20.65A10.75 10.75 0 0 0 20.65 41.2H31.05A10.75 10.75 0 0 0 39.1 22.6"/></g></svg><svg class="ic" style="left:344px;top:1268px" width="44" height="44" viewBox="-0.35 0.33 44 44"><g fill="none" stroke-linecap="round" stroke-linejoin="round"><path d="M14.5 9.5A17 17 0 1 1 8.07 15.05"/><path d="M19.5 2.5L14.5 9L20.2 13.4"/></g></svg><span class="bdg g" style="left:1758.3px;top:1274.9px"></span><span class="bdg g" style="left:2318.7px;top:1274.9px"></span><div class="sep" style="top:1342.0px"></div><svg class="ic" style="left:65px;top:1373px" width="38" height="40" viewBox="-0.2 -0.4 38 40"><g fill="none" stroke="#666" stroke-width="2"><rect x="1" y="1" width="34" height="36.3" rx="9.8"/></g></svg><svg class="ic" style="left:152px;top:1363px" width="44.25" height="44.25" viewBox="-0.054 -0.266 24 24"><g fill="none" stroke="#666666" stroke-width="1.5"><path d="M3.27489 15.2957C2.42496 14.1915 2 13.6394 2 12C2 10.3606 2.42496 9.80853 3.27489 8.70433C4.97196 6.49956 7.81811 4 12 4C16.1819 4 19.028 6.49956 20.7251 8.70433C21.575 9.80853 22 10.3606 22 12C22 13.6394 21.575 14.1915 20.7251 15.2957C19.028 17.5004 16.1819 20 12 20C7.81811 20 4.97196 17.5004 3.27489 15.2957Z"/><circle cx="12" cy="12" r="3.4"/></g></svg><svg class="ic" style="left:216px;top:1363px" width="44.4" height="44.4" viewBox="0.1 0.18 24 24"><g fill="none" stroke="#666666" stroke-width="1.5" stroke-linecap="round" stroke-linejoin="round"><path d="M2 12C2 7.286 2 4.929 3.464 3.464C4.929 2 7.286 2 12 2C16.714 2 19.071 2 20.536 3.464C22 4.929 22 7.286 22 12C22 16.714 22 19.071 20.536 20.536C19.071 22 16.714 22 12 22C7.286 22 4.929 22 3.464 20.536C2 19.071 2 16.714 2 12Z"/><path d="M5.6 15L9.6 10.4L14.2 13.4L18.4 8.5"/><circle cx="18.1" cy="17.9" r="5.4" fill="#fff"/><path d="M18.1 15.95V19.85M16.15 17.9H20.05"/></g></svg><svg class="ic" style="left:280px;top:1364px" width="44" height="44" viewBox="0 0.33 44 44"><g fill="none" stroke="#666666" stroke-width="2.75" stroke-linecap="round"><path d="M4.7 23.7A11 11 0 0 1 13.3 5.2H22.3A11 11 0 0 1 22.3 27.2H17.2"/><path d="M26.5 19.7H20.65A10.75 10.75 0 0 0 20.65 41.2H31.05A10.75 10.75 0 0 0 39.1 22.6"/></g></svg><svg class="ic" style="left:344px;top:1364px" width="44" height="44" viewBox="-0.35 0.33 44 44"><g fill="none" stroke-linecap="round" stroke-linejoin="round"><path d="M14.5 9.5A17 17 0 1 1 8.07 15.05"/><path d="M19.5 2.5L14.5 9L20.2 13.4"/></g></svg><span class="bdg g" style="left:1758.3px;top:1370.9px"></span><span class="bdg g" style="left:2318.7px;top:1370.9px"></span><div class="sep" style="top:1438.0px"></div>
</div>
<div id="fline"></div>
<div id="fab"></div>
<div id="txt">
<span class="t" style="left:103.83px;top:31.82px;font-size:28.92px;line-height:28.92px;color:#6a6a6a;transform:scaleX(1.0293);">Monitoring</span><span class="t" style="left:103.75px;top:67.03px;font-size:32.33px;line-height:32.33px;color:#000;transform:scaleX(1.0089);">Meters</span><span class="t" style="left:1471.42px;top:47.01px;font-size:33.06px;line-height:33.06px;color:#9a9a9a;transform:scaleX(0.9378);">Search...</span><span class="t" style="left:2221.84px;top:39.21px;font-size:33.06px;line-height:33.06px;color:#fff;transform:scaleX(0.9697);">AI</span><span class="t" style="left:2363.49px;top:45.37px;font-size:35.12px;line-height:35.12px;color:#e6eefd;transform:scaleX(1.1304);">J</span><span class="t" style="left:167.61px;top:206.41px;font-size:33.06px;line-height:33.06px;color:#fff;transform:scaleX(1.0141);">List</span><span class="t" style="left:344.34px;top:206.41px;font-size:33.06px;line-height:33.06px;color:#0d57d2;transform:scaleX(0.9626);">Advanced</span><span class="t" style="left:459.77px;top:310.82px;font-size:28.92px;line-height:28.92px;color:#000;transform:scaleX(1.0373);">Is part of</span><span class="t" style="left:1160.77px;top:310.82px;font-size:28.92px;line-height:28.92px;color:#000;transform:scaleX(1.0084);">Description Sensor / Meter</span><span class="t" style="left:1760.64px;top:310.82px;font-size:28.92px;line-height:28.92px;color:#000;transform:scaleX(0.9800);">Enabled</span><span class="t" style="left:2020.66px;top:310.82px;font-size:28.92px;line-height:28.92px;color:#000;transform:scaleX(0.9917);">Serial number</span><span class="t" style="left:2319.68px;top:310.82px;font-size:28.92px;line-height:28.92px;color:#000;transform:scaleX(0.9897);">Is a Counter</span><span class="t" style="left:79.04px;top:1511.52px;font-size:28.92px;line-height:28.92px;color:#a6a6a6;transform:scaleX(1.0103);">Showing</span><span class="t" style="left:196.75px;top:1511.52px;font-size:28.92px;line-height:28.92px;color:#a6a6a6;transform:scaleX(0.9997);">200</span><span class="t" style="left:252.97px;top:1511.52px;font-size:28.92px;line-height:28.92px;color:#a6a6a6;transform:scaleX(0.9766);">of</span><span class="t" style="left:286.24px;top:1511.52px;font-size:28.92px;line-height:28.92px;color:#a6a6a6;transform:scaleX(1.0073);">1338</span><span class="t" style="left:456.60px;top:419.22px;font-size:28.92px;line-height:28.92px;color:#666666;transform:scaleX(0.9062);">MOTOR ELECTRICO { MOT-ELEC }</span><span class="t" style="left:1156.78px;top:419.22px;font-size:28.92px;line-height:28.92px;color:#666666;transform:scaleX(0.9149);">MEDIDOR DE TEMPERATURA</span><span class="t" style="left:1538.75px;top:419.22px;font-size:28.92px;line-height:28.92px;color:#666666;transform:scaleX(0.9877);">chia</span><span class="t" style="left:2017.38px;top:419.22px;font-size:28.92px;line-height:28.92px;color:#666666;transform:scaleX(1.0048);">0</span><span class="t" style="left:1760.73px;top:418.31px;font-size:33.06px;line-height:33.06px;color:#0a9a45;transform:scaleX(0.9861);">Yes</span><span class="t" style="left:2326.36px;top:418.31px;font-size:33.06px;line-height:33.06px;color:#d02b2b;transform:scaleX(0.9918);">No</span><span class="t" style="left:457.20px;top:515.22px;font-size:28.92px;line-height:28.92px;color:#666666;transform:scaleX(0.9508);">Banda</span><span class="t" style="left:546.86px;top:515.22px;font-size:28.92px;line-height:28.92px;color:#666666;transform:scaleX(0.9996);">transportadora</span><span class="t" style="left:744.24px;top:515.22px;font-size:28.92px;line-height:28.92px;color:#666666;transform:scaleX(0.8891);">FU</span><span class="t" style="left:787.37px;top:515.22px;font-size:28.92px;line-height:28.92px;color:#666666;transform:scaleX(0.9271);">{</span><span class="t" style="left:803.00px;top:515.22px;font-size:28.92px;line-height:28.92px;color:#666666;transform:scaleX(0.9047);">EQ-EM-BT-001</span><span class="t" style="left:991.07px;top:515.22px;font-size:28.92px;line-height:28.92px;color:#666666;transform:scaleX(0.8960);">}</span><span class="t" style="left:1007.90px;top:515.22px;font-size:28.92px;line-height:28.92px;color:#666666;transform:scaleX(0.9043);">EJEMPL…</span><span class="t" style="left:1157.38px;top:515.22px;font-size:28.92px;line-height:28.92px;color:#666666;transform:scaleX(0.9985);">Odometro</span><span class="t" style="left:1760.73px;top:514.31px;font-size:33.06px;line-height:33.06px;color:#0a9a45;transform:scaleX(0.9861);">Yes</span><span class="t" style="left:2321.03px;top:514.31px;font-size:33.06px;line-height:33.06px;color:#0a9a45;transform:scaleX(0.9861);">Yes</span><span class="t" style="left:457.20px;top:611.22px;font-size:28.92px;line-height:28.92px;color:#666666;transform:scaleX(0.9508);">Banda</span><span class="t" style="left:546.86px;top:611.22px;font-size:28.92px;line-height:28.92px;color:#666666;transform:scaleX(0.9996);">transportadora</span><span class="t" style="left:744.24px;top:611.22px;font-size:28.92px;line-height:28.92px;color:#666666;transform:scaleX(0.8891);">FU</span><span class="t" style="left:787.37px;top:611.22px;font-size:28.92px;line-height:28.92px;color:#666666;transform:scaleX(0.9271);">{</span><span class="t" style="left:803.00px;top:611.22px;font-size:28.92px;line-height:28.92px;color:#666666;transform:scaleX(0.9047);">EQ-EM-BT-001</span><span class="t" style="left:991.07px;top:611.22px;font-size:28.92px;line-height:28.92px;color:#666666;transform:scaleX(0.8960);">}</span><span class="t" style="left:1007.90px;top:611.22px;font-size:28.92px;line-height:28.92px;color:#666666;transform:scaleX(0.9043);">EJEMPL…</span><span class="t" style="left:1156.54px;top:611.22px;font-size:28.92px;line-height:28.92px;color:#666666;transform:scaleX(0.9316);">MEDIDOR DE AMPERAJE</span><span class="t" style="left:1760.73px;top:610.31px;font-size:33.06px;line-height:33.06px;color:#0a9a45;transform:scaleX(0.9861);">Yes</span><span class="t" style="left:2326.36px;top:610.31px;font-size:33.06px;line-height:33.06px;color:#d02b2b;transform:scaleX(0.9918);">No</span><span class="t" style="left:457.18px;top:707.22px;font-size:28.92px;line-height:28.92px;color:#666666;transform:scaleX(0.9619);">Belt</span><span class="t" style="left:514.96px;top:707.22px;font-size:28.92px;line-height:28.92px;color:#666666;transform:scaleX(0.9813);">conveyor</span><span class="t" style="left:639.57px;top:707.22px;font-size:28.92px;line-height:28.92px;color:#666666;transform:scaleX(0.9271);">{</span><span class="t" style="left:654.22px;top:707.22px;font-size:28.92px;line-height:28.92px;color:#666666;transform:scaleX(0.9410);">BT-003</span><span class="t" style="left:749.67px;top:707.22px;font-size:28.92px;line-height:28.92px;color:#666666;transform:scaleX(0.9280);">}</span><span class="t" style="left:1156.75px;top:707.22px;font-size:28.92px;line-height:28.92px;color:#666666;transform:scaleX(0.9276);">MEDIDOR DE AMPERAJE</span><span class="t" style="left:1485.91px;top:707.22px;font-size:28.92px;line-height:28.92px;color:#666666;transform:scaleX(0.9788);">prueba</span><span class="t" style="left:1582.80px;top:707.22px;font-size:28.92px;line-height:28.92px;color:#666666;transform:scaleX(0.9104);">JOSE</span><span class="t" style="left:1760.73px;top:706.31px;font-size:33.06px;line-height:33.06px;color:#0a9a45;transform:scaleX(0.9861);">Yes</span><span class="t" style="left:2326.36px;top:706.31px;font-size:33.06px;line-height:33.06px;color:#d02b2b;transform:scaleX(0.9918);">No</span><span class="t" style="left:457.24px;top:803.22px;font-size:28.92px;line-height:28.92px;color:#666666;transform:scaleX(0.9323);">HORNO 02 { HOR-02 }</span><span class="t" style="left:741.40px;top:803.22px;font-size:28.92px;line-height:28.92px;color:#666666;transform:scaleX(0.9962);">Propio</span><span class="t" style="left:832.72px;top:803.22px;font-size:28.92px;line-height:28.92px;color:#666666;transform:scaleX(0.9316);">INOXIDABLE</span><span class="t" style="left:1157.35px;top:803.22px;font-size:28.92px;line-height:28.92px;color:#666666;transform:scaleX(1.0043);">SI(0)/NO(1)</span><span class="t" style="left:2017.38px;top:803.22px;font-size:28.92px;line-height:28.92px;color:#666666;transform:scaleX(1.0048);">0</span><span class="t" style="left:1760.73px;top:802.31px;font-size:33.06px;line-height:33.06px;color:#0a9a45;transform:scaleX(0.9861);">Yes</span><span class="t" style="left:2326.36px;top:802.31px;font-size:33.06px;line-height:33.06px;color:#d02b2b;transform:scaleX(0.9918);">No</span><span class="t" style="left:457.44px;top:899.22px;font-size:28.92px;line-height:28.92px;color:#666666;transform:scaleX(0.9158);">CORTADORA DE COMFORT { COR-COM-01 }</span><span class="t" style="left:1156.59px;top:899.22px;font-size:28.92px;line-height:28.92px;color:#666666;transform:scaleX(0.9117);">MEDIDOR DE UNIDADES PRODUCIDAS</span><span class="t" style="left:1760.73px;top:898.31px;font-size:33.06px;line-height:33.06px;color:#0a9a45;transform:scaleX(0.9861);">Yes</span><span class="t" style="left:2321.03px;top:898.31px;font-size:33.06px;line-height:33.06px;color:#0a9a45;transform:scaleX(0.9861);">Yes</span><span class="t" style="left:457.40px;top:995.22px;font-size:28.92px;line-height:28.92px;color:#666666;transform:scaleX(0.9526);">CAMIONETA DMAX { DMAX-01 } EJEMPLO</span><span class="t" style="left:1157.59px;top:995.22px;font-size:28.92px;line-height:28.92px;color:#666666;transform:scaleX(0.9898);">Odometro</span><span class="t" style="left:1292.48px;top:995.22px;font-size:28.92px;line-height:28.92px;color:#666666;transform:scaleX(1.0283);">3</span><span class="t" style="left:1316.14px;top:995.22px;font-size:28.92px;line-height:28.92px;color:#666666;transform:scaleX(0.9315);">DMAX-01</span><span class="t" style="left:1760.73px;top:994.31px;font-size:33.06px;line-height:33.06px;color:#0a9a45;transform:scaleX(0.9861);">Yes</span><span class="t" style="left:2321.03px;top:994.31px;font-size:33.06px;line-height:33.06px;color:#0a9a45;transform:scaleX(0.9861);">Yes</span><span class="t" style="left:456.60px;top:1091.22px;font-size:28.92px;line-height:28.92px;color:#666666;transform:scaleX(0.9062);">MOTOR ELECTRICO { MOT-ELEC }</span><span class="t" style="left:1156.57px;top:1091.22px;font-size:28.92px;line-height:28.92px;color:#666666;transform:scaleX(0.9216);">HOROMETRO</span><span class="t" style="left:1760.73px;top:1090.31px;font-size:33.06px;line-height:33.06px;color:#0a9a45;transform:scaleX(0.9861);">Yes</span><span class="t" style="left:2321.03px;top:1090.31px;font-size:33.06px;line-height:33.06px;color:#0a9a45;transform:scaleX(0.9861);">Yes</span><span class="t" style="left:457.39px;top:1187.22px;font-size:28.92px;line-height:28.92px;color:#666666;transform:scaleX(0.9574);">CAMIONETA DMAX { DMAX-02 }</span><span class="t" style="left:1157.48px;top:1187.22px;font-size:28.92px;line-height:28.92px;color:#666666;transform:scaleX(0.9148);">ODOMETRO</span><span class="t" style="left:1760.73px;top:1186.31px;font-size:33.06px;line-height:33.06px;color:#0a9a45;transform:scaleX(0.9861);">Yes</span><span class="t" style="left:2321.03px;top:1186.31px;font-size:33.06px;line-height:33.06px;color:#0a9a45;transform:scaleX(0.9861);">Yes</span><span class="t" style="left:457.41px;top:1283.22px;font-size:28.92px;line-height:28.92px;color:#666666;transform:scaleX(0.9426);">CARAMELIZADOR 01 { CARM-01 }</span><span class="t" style="left:1156.57px;top:1283.22px;font-size:28.92px;line-height:28.92px;color:#666666;transform:scaleX(0.9216);">HOROMETRO</span><span class="t" style="left:2017.38px;top:1283.22px;font-size:28.92px;line-height:28.92px;color:#666666;transform:scaleX(1.0048);">0</span><span class="t" style="left:1760.73px;top:1282.31px;font-size:33.06px;line-height:33.06px;color:#0a9a45;transform:scaleX(0.9861);">Yes</span><span class="t" style="left:2321.03px;top:1282.31px;font-size:33.06px;line-height:33.06px;color:#0a9a45;transform:scaleX(0.9861);">Yes</span><span class="t" style="left:457.41px;top:1379.22px;font-size:28.92px;line-height:28.92px;color:#666666;transform:scaleX(0.9441);">CARAMELIZADOR 02 { CARM-02 }</span><span class="t" style="left:1156.57px;top:1379.22px;font-size:28.92px;line-height:28.92px;color:#666666;transform:scaleX(0.9216);">HOROMETRO</span><span class="t" style="left:2017.38px;top:1379.22px;font-size:28.92px;line-height:28.92px;color:#666666;transform:scaleX(1.0048);">0</span><span class="t" style="left:1760.73px;top:1378.31px;font-size:33.06px;line-height:33.06px;color:#0a9a45;transform:scaleX(0.9861);">Yes</span><span class="t" style="left:2321.03px;top:1378.31px;font-size:33.06px;line-height:33.06px;color:#0a9a45;transform:scaleX(0.9861);">Yes</span>
</div>
<svg id="redbox" width="2508" height="1622" viewBox="0 0 2508 1622"><rect x="36.25" y="291.15" width="2447.5" height="1302.4" rx="0.5" fill="none" stroke="#ff0000" stroke-width="4.5"/></svg>
</body></html>
